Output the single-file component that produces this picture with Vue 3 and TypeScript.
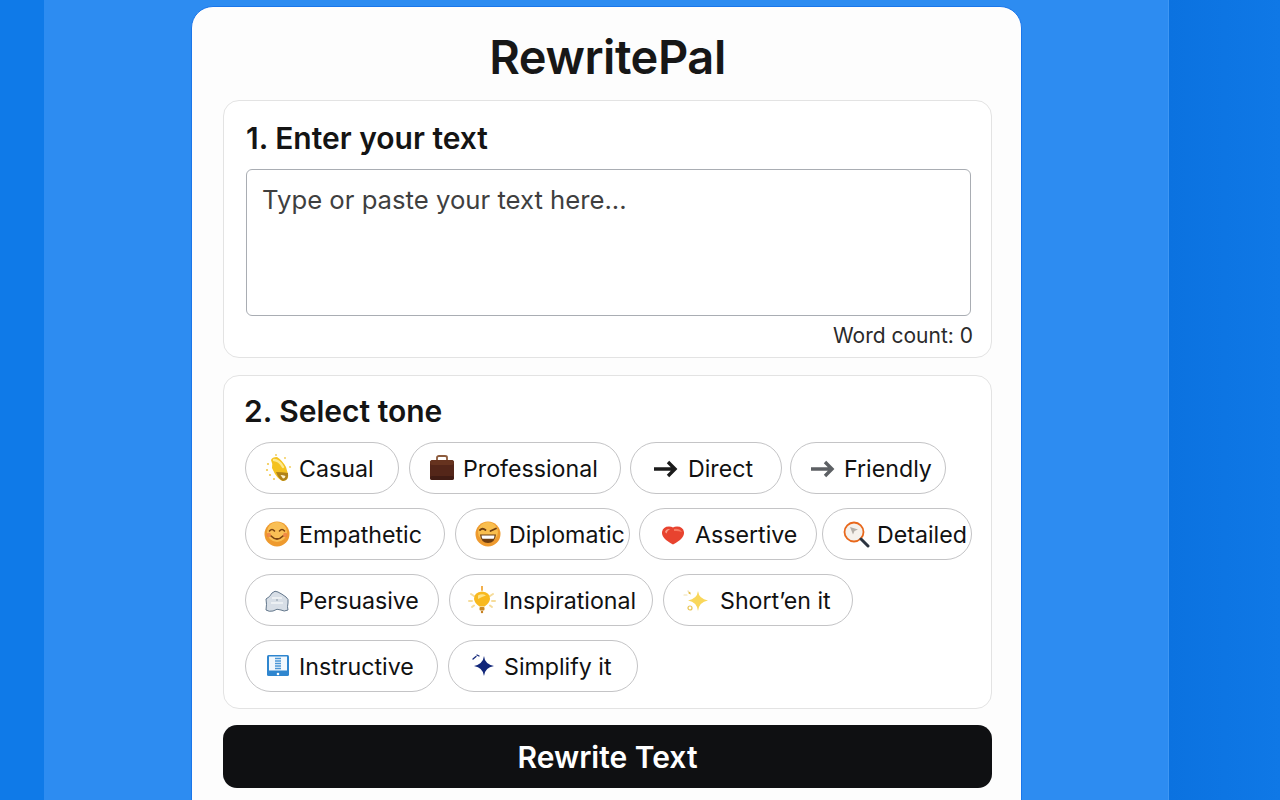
<script setup lang="ts">
import { ref } from 'vue'

interface Tone {
  label: string
  icon: string
  width: number
  iconX: number
  textX: number
  after: number
}

const text = ref('')

const toneRows: Tone[][] = [
  [
    { label: 'Casual', icon: 'wave', width: 154, iconX: 18, textX: 53, after: 10 },
    { label: 'Professional', icon: 'case', width: 212, iconX: 18, textX: 53, after: 9 },
    { label: 'Direct', icon: 'arrow', width: 152, iconX: 21, textX: 57, after: 8 },
    { label: 'Friendly', icon: 'arrowGrey', width: 156, iconX: 18, textX: 53, after: 0 },
  ],
  [
    { label: 'Empathetic', icon: 'smile', width: 200, iconX: 17, textX: 53, after: 10 },
    { label: 'Diplomatic', icon: 'grin', width: 175, iconX: 18, textX: 53, after: 9 },
    { label: 'Assertive', icon: 'heart', width: 178, iconX: 19, textX: 55, after: 5 },
    { label: 'Detailed', icon: 'search', width: 150, iconX: 19, textX: 54, after: 0 },
  ],
  [
    { label: 'Persuasive', icon: 'cloud', width: 194, iconX: 17, textX: 53, after: 10 },
    { label: 'Inspirational', icon: 'bulb', width: 204, iconX: 18, textX: 53, after: 10 },
    { label: 'Short’en it', icon: 'sparkle', width: 190, iconX: 17, textX: 56, after: 0 },
  ],
  [
    { label: 'Instructive', icon: 'book', width: 193, iconX: 18, textX: 53, after: 10 },
    { label: 'Simplify it', icon: 'star', width: 190, iconX: 20, textX: 55, after: 0 },
  ],
]

function chipStyle(tone: Tone) {
  return {
    width: `${tone.width}px`,
    marginRight: `${tone.after}px`,
    paddingLeft: `${tone.iconX}px`,
  }
}

function labelStyle(tone: Tone) {
  return { marginLeft: `${tone.textX - tone.iconX - 28}px` }
}
</script>

<template>
  <div class="page">
    <div class="column">
      <main class="card">
        <h1 class="title">RewritePal</h1>

        <section class="panel panel--input">
          <h2 class="panel__heading">1. Enter your text</h2>
          <textarea v-model="text" class="input" placeholder="Type or paste your text here..."></textarea>
          <div class="count">Word count: {{ text.trim() ? text.trim().split(/\s+/).length : 0 }}</div>
        </section>

        <section class="panel panel--tone">
          <h2 class="panel__heading panel__heading--tone">2. Select tone</h2>
          <div v-for="(row, i) in toneRows" :key="i" class="tone-row">
            <button v-for="tone in row" :key="tone.label" class="chip" type="button" :style="chipStyle(tone)">
              <svg class="chip__icon" viewBox="0 0 28 28" width="28" height="28" aria-hidden="true">
                <template v-if="tone.icon === 'wave'">
                  <path d="M7 6 Q8 3 13 3 Q18 6 22 13 L24 20 Q25 26 19 27 Q15 26 11 20 L8 14 Q9 10 7 6Z" fill="#f4c21f" />
                  <path d="M12 18 Q18 18 24 19 Q25 26 19 27 Q15 26 12 18Z" fill="#b08218" />
                  <path d="M16.500 21 Q19 21 21.500 22 Q21 24.500 19 24.500Z" fill="#fff4cc" />
                  <path d="M10 6 Q15 6 19 13" fill="none" stroke="#fde98f" stroke-width="2.400" stroke-linecap="round" />
                  <g fill="#f2c94c">
                    <circle cx="4" cy="10" r="1.100" />
                    <circle cx="3" cy="16" r="1.100" />
                    <circle cx="6" cy="21" r="1.100" />
                    <circle cx="10" cy="25" r="1" />
                    <circle cx="12" cy="1" r=".9" />
                    <circle cx="26" cy="13" r=".9" />
                    <circle cx="21" cy="4" r=".9" />
                  </g>
                </template>
                <template v-else-if="tone.icon === 'case'">
                  <path d="M9 7 V3.500 Q9 2 11 2 H17 Q19 2 19 3.500 V7" fill="none" stroke="#8c5b3c" stroke-width="1.800" />
                  <rect x="2" y="6" width="24" height="20" rx="2.500" fill="#542619" />
                  <rect x="2" y="6" width="24" height="5" rx="2.500" fill="#66331f" />
                  <rect x="2" y="22" width="24" height="4" rx="2" fill="#411c14" />
                </template>
                <template v-else-if="tone.icon === 'arrow' || tone.icon === 'arrowGrey'">
                  <path
                    d="M2 15 H22 M16 8 L23 15 L16 22"
                    fill="none"
                    :stroke="tone.icon === 'arrow' ? '#1b1b1b' : '#5d6064'"
                    stroke-width="3.400"
                    stroke-linejoin="miter"
                  />
                </template>
                <template v-else-if="tone.icon === 'smile'">
                  <circle cx="14" cy="14" r="12.500" fill="#ee9a2e" />
                  <circle cx="14" cy="12" r="10" fill="#f9bf55" />
                  <path d="M6.500 11 Q9 8 11.500 11 M16.500 11 Q19 8 21.500 11" fill="none" stroke="#7b4412" stroke-width="1.600" stroke-linecap="round" />
                  <path d="M8 16 Q14 22 20 16" fill="none" stroke="#7b4412" stroke-width="1.700" stroke-linecap="round" />
                  <circle cx="5.800" cy="15" r="2.200" fill="#ee7a44" opacity=".75" />
                  <circle cx="22.200" cy="15" r="2.200" fill="#ee7a44" opacity=".75" />
                </template>
                <template v-else-if="tone.icon === 'grin'">
                  <circle cx="14" cy="14" r="12.500" fill="#ee9a2e" />
                  <circle cx="14" cy="12" r="10" fill="#f9be4e" />
                  <path d="M6 10 Q8.500 7.500 11.500 10 M16.500 11 L22 8.500" fill="none" stroke="#6e3d10" stroke-width="1.800" stroke-linecap="round" />
                  <path d="M6 14.500 H22 Q21 23 14 23 Q7 23 6 14.500Z" fill="#6e3d10" />
                  <path d="M7.500 15.500 H20.500 Q20.300 18 19.500 18.700 H8.500 Q7.700 18 7.500 15.500Z" fill="#fff" />
                </template>
                <template v-else-if="tone.icon === 'heart'">
                  <path d="M14 24.500 Q11 23 7 20 Q2.500 16 3 12 Q4 6.500 10 6.500 Q12.500 6.500 14 7.500 Q15.500 6.500 18 6.500 Q24 6.500 25 12 Q25.500 16 21 20 Q17 23 14 24.500Z" fill="#e8432f" />
                  <path d="M6 12 Q7 8.500 11 9 Q8 10.500 7.500 13.500Z" fill="#f9a08a" />
                  <path d="M15 9 Q20 8 23 12 Q19 10.500 15 11Z" fill="#f77a62" />
                </template>
                <template v-else-if="tone.icon === 'search'">
                  <circle cx="12" cy="12" r="9.500" fill="#f5f1ec" stroke="#e8681c" stroke-width="1.800" />
                  <path d="M8 7 L16 9.500 L12.500 11 L11 14.500Z" fill="#b3aea8" />
                  <path d="M19 19 L26 26" stroke="#2c3440" stroke-width="3" stroke-linecap="round" />
                </template>
                <template v-else-if="tone.icon === 'cloud'">
                  <path d="M3 24 Q4 18 3 13 Q7 11 9 7 Q12 4 15 6 Q19 8 23 11 Q26 13 25 17 Q24 21 25 24 Q21 26 18 24 Q14 22 10 25 Q6 26 3 24Z" fill="#d7dee6" stroke="#62768b" stroke-width="1" />
                  <path d="M9 12 H19 M8 17 H20" stroke="#f4f6f8" stroke-width="1.500" />
                  <circle cx="14" cy="14" r="1" fill="#a6b2bd" />
                </template>
                <template v-else-if="tone.icon === 'bulb'">
                  <path d="M14 0 V4" stroke="#f2a838" stroke-width="1.800" stroke-linecap="round" />
                  <path d="M3 8 L6 10 M25 8 L22 10 M1 15 H4 M27 15 H24 M4 21 L6 19.500 M24 21 L22 19.500" stroke="#f6dc9a" stroke-width="2" stroke-linecap="round" />
                  <path d="M14 5.500 Q22 6 22 13 Q21.500 17 16.500 20.500 H11.500 Q6.500 17 6 13 Q6 6 14 5.500Z" fill="#f8b91f" />
                  <path d="M10 9.500 Q14 7 18 9.500 Q14 10.500 10 13Z" fill="#fde48a" />
                  <rect x="11.500" y="21" width="5" height="3.500" rx="1" fill="#cc8a22" />
                  <circle cx="14" cy="26" r="1.200" fill="#c77f1e" />
                </template>
                <template v-else-if="tone.icon === 'sparkle'">
                  <path d="M17 5 Q18 13 27 14.500 Q18 16 17 25 Q16 16 7 14.500 Q16 13 17 5Z" fill="#f9d75a" />
                  <path d="M7 5 L9.500 8 M3 9 H6" stroke="#f0e0ae" stroke-width="1.200" stroke-linecap="round" />
                  <circle cx="8.500" cy="7" r="1" fill="#e6b93e" />
                  <circle cx="9" cy="22" r="2" fill="none" stroke="#e9c554" stroke-width="1.200" />
                </template>
                <template v-else-if="tone.icon === 'book'">
                  <rect x="3" y="3" width="22" height="21" rx="1.500" fill="#2f86cf" />
                  <rect x="5" y="4.500" width="18" height="14" fill="#f2f8fd" />
                  <path d="M11 6.500 H17 M11 9 H17 M11 11.500 H17 M11 14 H17 M11 16.500 H17" stroke="#4b96d6" stroke-width="1.300" />
                  <circle cx="14" cy="22" r="1.300" fill="#fff" />
                </template>
                <template v-else>
                  <path d="M15 4 Q15.700 12 25 14 Q15.700 15.500 15 24 Q14 15.500 5 14 Q14 12 15 4Z" fill="#12277a" />
                  <path d="M4 7 L7 4.500 M8 3 L10 4" stroke="#12277a" stroke-width="1.300" stroke-linecap="round" />
                </template>
              </svg>
              <span class="chip__label" :style="labelStyle(tone)">{{ tone.label }}</span>
            </button>
          </div>
        </section>

        <button class="submit" type="button">Rewrite Text</button>
      </main>
    </div>
  </div>
</template>

<style>
html,
body {
  margin: 0;
  overflow: hidden;
}
</style>

<style scoped>
.page {
  width: 1280px;
  height: 800px;
  overflow: hidden;
  box-sizing: border-box;
  padding-left: 44px;
  background: linear-gradient(90deg, #0f7ae8 0, #0f7ae8 44px, #0b72e0 1169px, #0f78e6 100%);
  font-family: Inter, 'Liberation Sans', sans-serif;
  color: #111;
}

.column {
  width: 1125px;
  height: 800px;
  box-sizing: border-box;
  padding: 6px 0 0 147px;
  background: #2d8cf1;
  border-right: 1px solid #3f97f3;
}

.card {
  width: 831px;
  height: 860px;
  box-sizing: border-box;
  padding: 0 29px 0 31px;
  background: #fdfdfd;
  border: 1px solid #1a76ea;
  border-radius: 22px;
}

.title {
  margin: 0;
  height: 93px;
  padding-top: 5px;
  box-sizing: border-box;
  display: flex;
  align-items: center;
  justify-content: center;
  font-size: 47px;
  font-weight: 600;
  letter-spacing: -0.01em;
  color: #171717;
}

.panel {
  box-sizing: border-box;
  background: #fff;
  border: 1px solid #e3e3e3;
  border-radius: 16px;
}

.panel--input {
  height: 258px;
  padding: 0 20px 0 22px;
}

.panel--tone {
  height: 334px;
  margin-top: 17px;
  padding: 0 0 0 21px;
}

.panel__heading {
  margin: 0;
  height: 68px;
  padding-top: 6px;
  box-sizing: border-box;
  display: flex;
  align-items: center;
  font-size: 30px;
  font-weight: 600;
  color: #141414;
}

.panel__heading--tone {
  height: 66px;
  padding-top: 4px;
  margin-left: -1px;
}

.input {
  display: block;
  width: 725px;
  height: 147px;
  box-sizing: border-box;
  padding: 14px 15px;
  resize: none;
  outline: none;
  background: #fff;
  border: 1px solid #a9adb3;
  border-radius: 6px;
  font: 400 25.7px Inter, 'Liberation Sans', sans-serif;
  color: #222;
}

.input::placeholder {
  color: #3f3f3f;
  opacity: 1;
}

.count {
  margin-top: 7px;
  margin-right: -2px;
  font-size: 21px;
  line-height: 26px;
  text-align: right;
  color: #2a2a2a;
}

.tone-row {
  display: flex;
  margin-bottom: 14px;
}

.chip {
  flex: none;
  height: 52px;
  box-sizing: border-box;
  display: flex;
  align-items: center;
  padding: 0;
  background: #fff;
  border: 1px solid #c4c4c6;
  border-radius: 26px;
  font: 400 23.2px Inter, 'Liberation Sans', sans-serif;
  color: #111;
  white-space: nowrap;
}

.chip__icon {
  flex: none;
  display: block;
}

.chip__label {
  display: block;
  padding-top: 1px;
}

.submit {
  display: block;
  width: 769px;
  height: 63px;
  margin-top: 16px;
  background: #0f1012;
  border: none;
  border-radius: 14px;
  font: 600 30px Inter, 'Liberation Sans', sans-serif;
  color: #fff;
}
</style>
